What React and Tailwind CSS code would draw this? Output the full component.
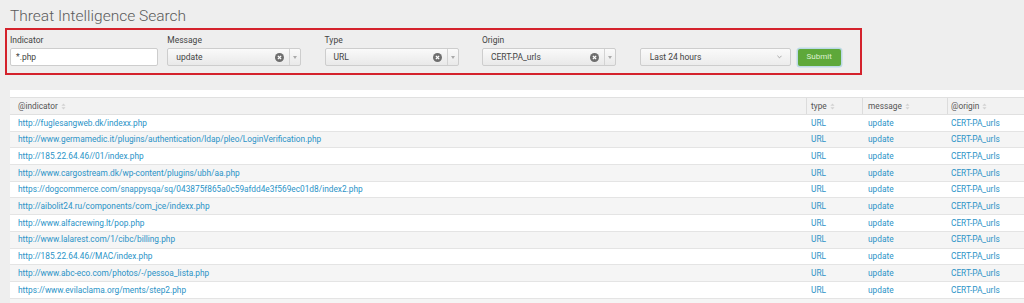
import React from 'react';

const rows = [
  'http://fuglesangweb.dk/indexx.php',
  'http://www.germamedic.it/plugins/authentication/ldap/pleo/LoginVerification.php',
  'http://185.22.64.46//01/index.php',
  'http://www.cargostream.dk/wp-content/plugins/ubh/aa.php',
  'https://dogcommerce.com/snappysqa/sq/043875f865a0c59afdd4e3f569ec01d8/index2.php',
  'http://aibolit24.ru/components/com_jce/indexx.php',
  'http://www.alfacrewing.lt/pop.php',
  'http://www.lalarest.com/1/cibc/billing.php',
  'http://185.22.64.46//MAC/index.php',
  'http://www.abc-eco.com/photos/-/pessoa_lista.php',
  'https://www.evilaclama.org/ments/step2.php',
  '',
];

function SortIcon() {
  return (
    <svg width="5" height="7" viewBox="0 0 6 8" className="ml-[3px] inline-block">
      <path d="M3 0.5 L5.5 3 H0.5 Z" fill="#d2d2d2" />
      <path d="M3 7.5 L5.5 5 H0.5 Z" fill="#d2d2d2" />
    </svg>
  );
}

function ClearIcon() {
  return (
    <svg width="9" height="9" viewBox="0 0 10 10">
      <circle cx="5" cy="5" r="5" fill="#6e6e6e" />
      <path d="M3.2 3.2 L6.8 6.8 M6.8 3.2 L3.2 6.8" stroke="#fff" strokeWidth="1.5" />
    </svg>
  );
}

function Select({ value }) {
  return (
    <div className="flex h-[18px] w-[134px] items-center rounded-[2px] border border-[#cdcdcd] bg-gradient-to-b from-[#fafafa] to-[#e9e9e9] text-[8.5px] text-[#444]">
      <span className="flex-1 pl-[8px]">{value}</span>
      <span className="mr-[5px] flex items-center"><ClearIcon /></span>
      <span className="flex h-full w-[11px] items-center justify-center border-l border-[#d3d3d3]">
        <svg width="4" height="3" viewBox="0 0 4 3"><path d="M0 0 H4 L2 3 Z" fill="#aaa" /></svg>
      </span>
    </div>
  );
}

function Field({ label, children }) {
  return (
    <div className="flex w-[157.3px] flex-col">
      <div className="h-[14px] text-[8.5px] leading-[13px] text-[#444]">{label}</div>
      {children}
    </div>
  );
}

export default function App() {
  return (
    <div className="h-[303px] w-[1024px] overflow-hidden bg-[#eeeeee]" style={{ fontFamily: 'Roboto, "Liberation Sans", sans-serif' }}>
      <div className="pl-[10px] pt-[6px] text-[15.5px] font-light leading-[20px] text-[#5a5a5a]">Threat Intelligence Search</div>

      <div className="ml-[5px] mt-[2px] flex h-[47px] w-[857px] items-start border-2 border-[#d4222c] pl-[3px] pt-[4px]">
        <Field label="Indicator">
          <div className="flex h-[18px] w-[148px] items-center rounded-[2px] border border-[#cdcdcd] bg-white pl-[5px] text-[8.5px] text-[#444]">*.php</div>
        </Field>
        <Field label="Message"><Select value="update" /></Field>
        <Field label="Type"><Select value="URL" /></Field>
        <Field label="Origin"><Select value="CERT-PA_urls" /></Field>
        <div className="flex flex-col pl-[0.5px]">
          <div className="h-[14px]" />
          <div className="flex items-center">
            <div className="flex h-[18px] w-[151px] items-center rounded-[2px] border border-[#cdcdcd] bg-gradient-to-b from-[#fafafa] to-[#ececec] pl-[9px] pr-[8px] text-[8.5px] text-[#444]">
              <span className="flex-1">Last 24 hours</span>
              <svg width="5" height="4" viewBox="0 0 6 4"><path d="M0.5 0.5 L3 3 L5.5 0.5" stroke="#999" strokeWidth="1" fill="none" /></svg>
            </div>
            <button className="ml-[7px] flex h-[17px] w-[43px] items-center justify-center rounded-[2px] bg-[#5ea83a] text-[8px] text-[#dff0d4] shadow-[0_0_0_1.5px_#bcd9e6]">Submit</button>
          </div>
        </div>
      </div>

      <div className="ml-[10px] mt-[15px] h-[7px] bg-white" />
      <div className="ml-[10px] text-[8.3px]">
        <div className="grid h-[18px] grid-cols-[796px_56px_85px_1fr] items-center border-y border-[#e0e0e0] bg-[#f2f2f2] text-[#555]">
          <div className="pl-[8px]">@indicator<SortIcon /></div>
          <div className="flex h-full items-center border-l border-[#dcdcdc] pl-[4px]">type<SortIcon /></div>
          <div className="flex h-full items-center border-l border-[#dcdcdc] pl-[5px]">message<SortIcon /></div>
          <div className="flex h-full items-center border-l border-[#dcdcdc] pl-[3px]">@origin<SortIcon /></div>
        </div>
        {rows.map((url, i) => (
          <div key={i} className={`grid h-[16.7px] grid-cols-[796px_56px_85px_1fr] items-center border-b border-[#e4e4e4] text-[#2a93c7] ${i % 2 === 1 ? 'bg-[#f5f5f5]' : 'bg-white'}`}>
            <div className="pl-[8px]">{url}</div>
            <div className="pl-[5px]">{url && 'URL'}</div>
            <div className="pl-[6px]">{url && 'update'}</div>
            <div className="pl-[4px]">{url && 'CERT-PA_urls'}</div>
          </div>
        ))}
      </div>
    </div>
  );
}
